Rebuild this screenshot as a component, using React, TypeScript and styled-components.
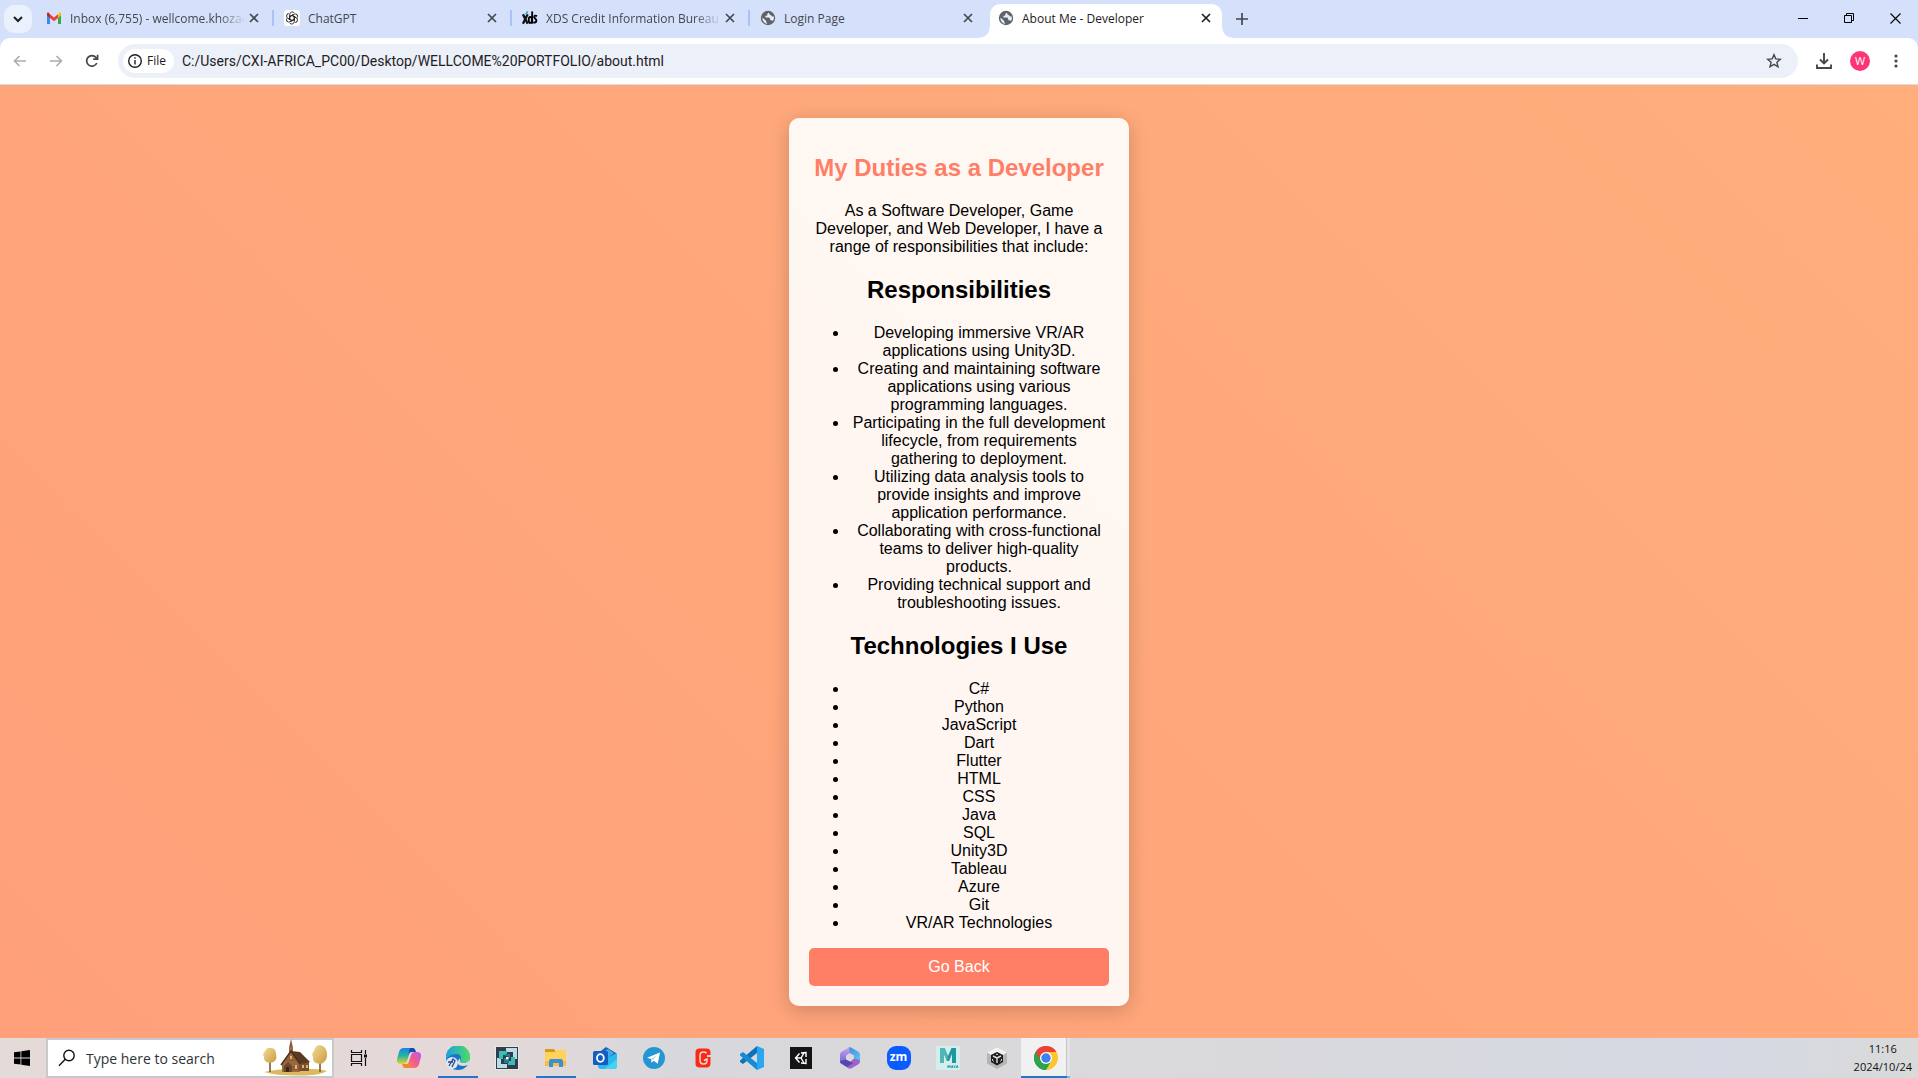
import React from "react";
import styled, { createGlobalStyle } from "styled-components";

const Global = createGlobalStyle`
  * { box-sizing: border-box; }
  body { margin: 0; }
  button, input { font: inherit; color: inherit; border: 0; background: none; padding: 0; }
`;

const ui = `"Open Sans", "Noto Sans", sans-serif`;
const arial = `"Liberation Sans", Arial, sans-serif`;

const Screen = styled.div`
  display: flex;
  flex-direction: column;
  min-height: 100vh;
  font-family: ${ui};
  background: #d5e1fb;
`;

const TabStrip = styled.header`
  display: flex;
  align-items: center;
  height: 38px;
  padding-left: 4px;
  color: #43474e;
`;

const TabSearch = styled.button`
  display: grid;
  place-items: center;
  width: 28px;
  height: 28px;
  border-radius: 10px;
  background: #ebf1fc;
  color: #1c1e22;
`;

const Tabs = styled.nav`
  display: flex;
  align-self: stretch;
  align-items: flex-end;
  padding-left: 2px;
`;

const Tab = styled.div<{ $active?: boolean; $divided?: boolean }>`
  position: relative;
  display: flex;
  align-items: center;
  width: 238px;
  height: 34px;
  padding: 0 10px 6px 12px;
  border-radius: 10px 10px 0 0;
  font-size: 12px;
  color: ${(p) => (p.$active ? "#1f2023" : "#43474e")};
  background: ${(p) => (p.$active ? "#fff" : "transparent")};

  &::after {
    content: "";
    position: absolute;
    display: ${(p) => (p.$divided ? "block" : "none")};
    right: -2px;
    top: 6px;
    width: 2px;
    height: 16px;
    background: #a8c4f6;
  }

  ${(p) =>
    p.$active &&
    `
    width: 232px;
    margin-left: 4px;
    padding: 0 8px 6px 8px;
    &::before {
      content: "";
      position: absolute;
      inset: auto -10px 0;
      height: 10px;
      background:
        radial-gradient(circle at 0 0, transparent 9px, #fff 10px) left / 10px 10px no-repeat,
        radial-gradient(circle at 100% 0, transparent 9px, #fff 10px) right / 10px 10px no-repeat;
    }
  `}
`;

const TabTitle = styled.span<{ $fade?: boolean }>`
  flex: 1;
  padding-left: 8px;
  overflow: hidden;
  white-space: nowrap;
  ${(p) => p.$fade && "mask-image: linear-gradient(to right, #000 85%, transparent);"}
`;

const IconButton = styled.button<{ $w?: number }>`
  display: grid;
  place-items: center;
  flex: none;
  width: ${(p) => p.$w ?? 16}px;
  height: 24px;
`;

const WindowButtons = styled.div`
  display: flex;
  margin-left: auto;
  padding-bottom: 2px;
  color: #000;
`;

const Toolbar = styled.div`
  display: flex;
  align-items: center;
  height: 47px;
  padding: 0 4px 1px 2px;
  background: #fff;
  border-bottom: 1px solid #d9dde3;
  border-radius: 10px 10px 0 0;
  color: #44474b;
`;

const AddressBar = styled.form`
  display: flex;
  align-items: center;
  flex: 1;
  gap: 8px;
  height: 34px;
  margin: 0 8px 0 8px;
  padding: 0 12px 0 5px;
  border-radius: 17px;
  background: #ebf0f9;
`;

const SchemeChip = styled.button`
  display: flex;
  align-items: center;
  gap: 4px;
  height: 24px;
  padding: 0 8px 0 4px;
  border-radius: 12px;
  background: #fff;
  font-size: 12px;
  font-weight: 500;
  color: #1f2023;
`;

const Url = styled.input`
  flex: 1;
  min-width: 0;
  font-family: Roboto, ${ui};
  font-size: 14px;
  color: #1f2023;
  outline: none;
`;

const Avatar = styled.span`
  display: grid;
  place-items: center;
  width: 20px;
  height: 20px;
  border-radius: 50%;
  background: #fb3576;
  color: #fff;
  font-size: 11px;
`;

const Page = styled.main`
  display: flex;
  flex: 1;
  align-items: center;
  justify-content: center;
  padding: 20px;
  background: linear-gradient(45deg, #ffa07a, #ffae7c);
  font-family: ${arial};
  font-size: 16px;
  line-height: 18px;
  color: #000;
`;

const Card = styled.section`
  width: 340px;
  padding: 20px;
  border-radius: 10px;
  background: rgba(255, 255, 255, 0.9);
  box-shadow: 0 4px 20px rgba(0, 0, 0, 0.2);
  text-align: center;
`;

const Heading = styled.h2<{ $accent?: boolean }>`
  margin: ${(p) => (p.$accent ? "16px" : "20px")} 0 20px;
  font-size: 24px;
  line-height: 28px;
  color: ${(p) => (p.$accent ? "#ff7f66" : "#000")};
`;

const Intro = styled.p`
  margin: 0;
`;

const List = styled.ul`
  margin: 0 0 16px;
  padding-left: 40px;
`;

const BackButton = styled.button`
  display: block;
  width: 100%;
  height: 38px;
  border-radius: 5px;
  background: #ff7f66;
  color: #fff;
`;

const Taskbar = styled.footer`
  display: flex;
  align-items: stretch;
  height: 40px;
  background: linear-gradient(to right, #e4dad8 0%, #e4d9d8 25%, #d8d8dc 35%, #dad9db 60%, #d5d9e3 90%, #d9dad9 100%);
`;

const StartButton = styled.button`
  display: grid;
  place-items: center;
  width: 46px;
  padding-right: 2px;
`;

const SearchBox = styled.label`
  display: flex;
  align-items: center;
  width: 288px;
  padding: 0 4px 0 10px;
  border: 2px solid #c9c9cb;
  background: #fff;
`;

const SearchInput = styled.input`
  flex: 1;
  min-width: 0;
  padding-left: 10px;
  font-size: 14px;
  outline: none;
  &::placeholder { color: #2f3338; opacity: 1; }
`;

const TaskButtons = styled.nav`
  display: flex;
  padding-left: 1px;
`;

const TaskButton = styled.button<{ $open?: boolean; $active?: boolean }>`
  display: grid;
  place-items: center;
  width: 49px;
  border-bottom: 2px solid transparent;
  border-top: 2px solid transparent;
  ${(p) => p.$open && "background: linear-gradient(#1f78cc, #1f78cc) center bottom / 40px 2px no-repeat border-box;"}
  ${(p) =>
    p.$active &&
    `background:
      linear-gradient(#1f78cc, #1f78cc) left bottom / 46px 2px no-repeat border-box,
      linear-gradient(#7fb3e2, #7fb3e2) right bottom / 3px 2px no-repeat border-box,
      linear-gradient(to right, #f1f1f2 45px, #c4c4c8 45px, #c4c4c8 46px, #e4e4e7 46px) border-box;`}
`;

const Clock = styled.time`
  display: flex;
  flex-direction: column;
  justify-content: center;
  margin-left: auto;
  padding-right: 6px;
  font-size: 11px;
  line-height: 18px;
  text-align: center;
  color: #111;
`;

const Close = () => (
  <svg width="10" height="10" viewBox="0 0 10 10" stroke="currentColor" strokeWidth="1.7"><path d="M1 1l8 8M9 1L1 9" /></svg>
);
const Gmail = () => (
  <svg width="16" height="16" viewBox="0 0 16 16">
    <path d="M1 3.5V14h3V7.5z" fill="#4285f4" /><path d="M12 7.5V14h3V3.5z" fill="#34a853" />
    <path d="M1 3.6v2l3 2.4V4.5L2.6 2.6Q1 2 1 3.6" fill="#c5221f" /><path d="M15 3.6v2L12 8V4.5l1.4-1.9Q15 2 15 3.6" fill="#fbbc04" />
    <path d="M4 4.3l4 3.2 4-3.2V8l-4 3.2L4 8z" fill="#ea4335" />
  </svg>
);
const Gpt = () => (
  <svg width="16" height="16" viewBox="0 0 16 16">
    <rect width="16" height="16" rx="3" fill="#fff" />
    <g fill="none" stroke="#222" strokeWidth="0.9">
      {[0, 60, 120, 180, 240, 300].map((a) => (
        <path key={a} transform={`rotate(${a} 8 8)`} d="M5.7 9.3V4.6a2.6 2.6 0 0 1 4.6-1.7M5.7 6.7L8 5.3l3.6 2.1" />
      ))}
    </g>
  </svg>
);
const Xds = () => (
  <svg width="16" height="16" viewBox="0 0 17 16">
    <path d="M1 4l5 10M6 4L1 14" stroke="#111" strokeWidth="2.4" /><path d="M4 4.5L6 1" stroke="#18a6c9" strokeWidth="1.6" />
    <ellipse cx="8.8" cy="10" rx="1.7" ry="3.2" fill="none" stroke="#000" strokeWidth="2" /><path d="M10.8 1v13" stroke="#000" strokeWidth="2" />
    <path d="M16 6c-3-1.5-4 1-2 2.6s2 5-2 4" fill="none" stroke="#000" strokeWidth="2" />
  </svg>
);
const Globe = () => (
  <svg width="16" height="16" viewBox="0 0 16 16">
    <circle cx="8" cy="8" r="7.2" fill="#5f6368" />
    <path d="M8.600 2.400L7.200 4.200v1.600H5.400v1.700h3.800l1 1.200v1.500h1.600l1.200.8a6 6 0 0 0 .8-4.400h-1.600L11 5.200 9.600 4.600zM2.400 7.400l3.800 3.500v1l1.200 2a6 6 0 0 1-5-6.500" fill="#e8eefb" />
  </svg>
);
const WindowsLogo = () => (
  <svg width="16" height="16" viewBox="0 0 16 16"><path d="M0 2.3l6.5-.9v6.1H0zM7.3 1.2L16 0v7.5H7.3zM0 8.4h6.5v6.2L0 13.7zM7.3 8.4H16V16l-8.7-1.2z" /></svg>
);
const Magnifier = () => (
  <svg width="18" height="18" viewBox="0 0 18 18" fill="none" stroke="#111" strokeWidth="1.4"><circle cx="11" cy="6.5" r="5.2" /><path d="M7.3 10.2L1 16.7" /></svg>
);
const Cabin = () => (
  <svg width="66" height="38" viewBox="0 0 66 38">
    <defs>
      <linearGradient id="leaf" x1="0" y1="0" x2="1" y2="1"><stop stopColor="#f3dc98" /><stop offset="1" stopColor="#c99a3c" /></linearGradient>
    </defs>
    <path d="M2 33q12-3 30-3 22-1 33 2-6 4-22 4.500Q14 37 2 33" fill="#dcb85f" />
    <path d="M8 20v13M58 20v13" stroke="#80572b" strokeWidth="1.6" />
    <path d="M3 12q2-4 6-3 5 0 5 6 2 8-6 9-7-1-6-6-2-3 1-6" fill="url(#leaf)" />
    <path d="M52 12q1-6 6-6 6 1 7 8 1 9-7 11-8-1-7-7-2-3 1-6" fill="url(#leaf)" />
    <path d="M27 9l2-9 2 9v6h-4z" fill="#8b5337" /><path d="M27 8h4v6h-4z" fill="#a4694a" />
    <path d="M20 25l9-13 9 12v9H20z" fill="#98683e" />
    <path d="M37 23h10v9H37z" fill="#7a4e30" /><path d="M29 12l9 1 10 10-10 2z" fill="#5b3a23" />
    <path d="M19 26l10-14 9 13" stroke="#4b2e1c" strokeWidth="1.500" fill="none" />
    <path d="M21 28h16M21 30.500h16M24 21h10M25.500 18.500h7M38 28h9M38 30.500h9" stroke="#6f482b" strokeWidth=".6" />
    <path d="M22 27l4-4 4 4v6h-8z" fill="#6d452a" /><path d="M24 28h3v5h-3z" fill="#3e2616" /><path d="M33 26h2v4h-2zM40 26h2v3h-2zM44 26h2v3h-2zM28 17h2v3h-2z" fill="#e2b566" />
  </svg>
);
const TaskView = () => (
  <svg width="20" height="16" viewBox="0 0 20 16" fill="none" stroke="#111" strokeWidth="1.2">
    <path d="M1.500 0v2.500h10V0M1.500 16v-2.500h10V16M1.500 4.500h10v7h-10zM15.500 0v4M15.500 8v8" /><path d="M14 4.500h3v3h-3z" fill="#111" stroke="none" />
  </svg>
);
const Copilot = () => (
  <svg width="24" height="24" viewBox="0 0 24 24">
    <defs>
      <linearGradient id="cpa" x1="0" y1="0" x2="0" y2="1"><stop stopColor="#1584e5" /><stop offset=".5" stopColor="#27b6a0" /><stop offset="1" stopColor="#f2cf28" /></linearGradient>
      <linearGradient id="cpb" x1="1" y1="0" x2="0" y2="1"><stop stopColor="#b45cf0" /><stop offset=".5" stopColor="#f35a8c" /><stop offset="1" stopColor="#ff9440" /></linearGradient>
    </defs>
    <path d="M7 2h9q-2 1-3 4l-3 9q-1 3-4 3H3q-4-1-3-5l2-7q1-4 5-4" fill="url(#cpa)" />
    <path d="M13 2h3q2 0 3 4h-4q-3 0-4 3z" fill="#1748b7" />
    <path d="M17 22H8q2-1 3-4l3-9q1-3 4-3h3q4 1 3 5l-2 7q-1 4-5 4" fill="url(#cpb)" />
    <path d="M11 22H8q-2 0-3-4h4q3 0 4-3z" fill="#f08a28" />
  </svg>
);
const Edge = () => (
  <svg width="24" height="24" viewBox="0 0 24 24">
    <defs><linearGradient id="edg"><stop stopColor="#1c9fe0" /><stop offset="1" stopColor="#4fdc63" /></linearGradient></defs>
    <circle cx="12" cy="12" r="12" fill="#1677c8" />
    <path d="M0 11A12 12 0 0 1 24 11q0 6-6 6-4 0-4-2 1-1 1-3 0-4-5-4Q3 8 0 14z" fill="url(#edg)" />
    <path d="M14 15q0 2 4 2 4 0 6-4 0 4-2 6-5 2-9 0-3-3 1-7" fill="#dfdbdd" />
    <circle cx="6" cy="17" r="6" fill="#dfe7f0" /><path d="M3 20l4-7 2 2-3 6M2 16h5" stroke="#224b88" strokeWidth="1.300" fill="none" />
  </svg>
);
const Squares = () => (
  <svg width="24" height="24" viewBox="0 0 24 24">
    <path d="M0 0h24v24H0z" fill="#e6e9ec" /><path d="M1 1h22v22H1z" fill="#333c4e" />
    <path d="M11 2h11v11h-4V6h-7zM2 12h4v6h6v4H2z" fill="#bcdce6" />
    <path d="M4 5h8v4H8v4H4zM13 15h3v-4h4v8h-7z" fill="#38bfb0" />
    <path d="M10 8h5v4h-2v-2h-3zM9 12h2v2h3v3H9z" fill="#187f9c" />
    <path d="M11 11h2.500v2.500H11z" fill="#fff" />
  </svg>
);
const Folder = () => (
  <svg width="22" height="20" viewBox="0 0 22 20">
    <path d="M0 1h9l2 3H0z" fill="#d89b0a" /><path d="M0 4h10l2-2h9v16H0z" fill="#ffd35b" /><path d="M0 13h21v5H0z" fill="#f3be42" /><path d="M4 19v-6l1-2h12l1 2v6h-4v-4H8v4z" fill="#3c8fd6" />
  </svg>
);
const Outlook = () => (
  <svg width="24" height="24" viewBox="0 0 24 24">
    <path d="M4 8l9-7 10 6v9H4z" fill="#1766b8" /><path d="M9 7l6-4 6 4-8 6z" fill="#48a9ea" /><path d="M5 16L24 7v13q0 3-3 3H8q-3 0-3-3z" fill="#28b9ee" /><path d="M11 23L24 13v7q0 3-3 3z" fill="#45d2f3" />
    <rect y="5" width="15" height="14" rx="1.5" fill="#125fc0" /><ellipse cx="7.4" cy="12" rx="3.4" ry="3.8" fill="none" stroke="#fff" strokeWidth="1.8" />
  </svg>
);
const Telegram = () => (
  <svg width="22" height="22" viewBox="0 0 22 22"><circle cx="11" cy="11" r="11" fill="#2497d3" /><path d="M4 10.8L17 5.5l-2.3 11.3-4-3-2.2 2-.4-3.7z" fill="#fff" /><path d="M8.2 12.1L14.5 8l-5 5" fill="#a9cfe8" /></svg>
);
const RedApp = () => (
  <svg width="16" height="20" viewBox="0 0 16 20">
    <rect x=".5" y=".5" width="15" height="19" rx="4" fill="#fa2a14" />
    <path d="M11.500 5.200Q10.500 4 8.500 4 5 4 5 7.500v5Q5 16 8.500 16q3.500 0 3.500-3.500V11L9 12.500" fill="none" stroke="#eadcdc" strokeWidth="1.500" />
    <path d="M12 7h4v2h-4z" fill="#d8d8dc" />
  </svg>
);
const VsCode = () => (
  <svg width="24" height="24" viewBox="0 0 24 24"><path d="M17 0l7 3v18l-7 3z" fill="#2ba6f0" /><path d="M17 0v7L3 18l-3-2v-1.500L17 0" fill="#0f71b8" /><path d="M17 24v-7L3 6 0 8v1.500L17 24" fill="#168bd3" /></svg>
);
const UnityBlack = () => (
  <svg width="22" height="22" viewBox="0 0 22 22"><path d="M0 0h22v22H0z" fill="#141414" /><g fill="none" stroke="#fff" strokeWidth="1.400"><path d="M9.500 6.500L5.500 11l4 4.500M5.500 11H11l3-5M11 11l3 5M11 6l5-.5v4.500M11 16l5 .5V12" /></g></svg>
);
const M365 = () => (
  <svg width="22" height="24" viewBox="0 0 22 24">
    <defs>
      <linearGradient id="ma" x1="0" y1="0" x2="1" y2="1"><stop stopColor="#4a86e0" /><stop offset="1" stopColor="#58cdf0" /></linearGradient>
      <linearGradient id="mb" x1="0" y1="0" x2="0" y2="1"><stop stopColor="#c8a0f4" /><stop offset="1" stopColor="#6a62d2" /></linearGradient>
    </defs>
    <path d="M9 2q2-1.500 4 0l6 3.500q2 1 2 3V16l-6-3.500V9.500L10 6.500z" fill="url(#ma)" />
    <path d="M10 1.500L3 5.500q-2 1-2 3V17l3 1 3-3V9.500l4-2.500z" fill="url(#mb)" />
    <path d="M1 15q0 2 2 3l6 4q2 1 4 0l6-3.500q2-1 2-3V14l-6-1.500-4 3.500z" fill="#9a64cc" />
    <path d="M1 15q0 2 2 3l5 3 6-4-3-1.500-4-2z" fill="#5a45b0" />
  </svg>
);
const ZoomBadge = styled.span`
  display: grid;
  place-items: center;
  width: 24px;
  height: 24px;
  border-radius: 9px;
  background: #0b5cff;
  color: #fff;
  font: 700 12px/20px ${ui};
  padding-bottom: 2px;
`;
const Maya = () => (
  <svg width="24" height="24" viewBox="0 0 24 24">
    <path d="M0 0h24v24H0z" fill="#d5eeed" />
    <path d="M4 17V2h4.500L12 10l3.500-8H20v15h-4V8l-3 7h-2L8 8v9z" fill="#1a9a9c" />
    <path d="M4 2h4.500L12 10l-1 5h0L8 8v9H4z" fill="#4fb8b4" />
    <path d="M12 22v-2.500l1 1.500 1-1.500V22M15.500 22l.7-2.500.8 2.500M18 19.500l.7 1.200.8-1.200M18.700 20.700V22M20.500 22l.7-2.500.8 2.500" stroke="#128f93" strokeWidth=".9" fill="none" />
  </svg>
);
const UnityHub = () => (
  <svg width="20" height="22" viewBox="0 0 20 22">
    <path d="M10 0l10 5.500v11L10 22 0 16.500v-11z" fill="#b5b5b5" /><path d="M10 0l10 5.500-4 2.500-6-3-6 3-4-2.500z" fill="#f2f2f2" />
    <path d="M10 5l6 3v7l-6 3.500L4 15V8z" fill="#1d1d1d" />
    <path d="M10 11v5M10 11L6 9M10 11l4-2" stroke="#dcdcdc" strokeWidth="1.400" />
    <path d="M9 7l1 .6 1-.6M5.500 12v1.500l1.300.8M14.500 12v1.500l-1.300.8" stroke="#dcdcdc" strokeWidth="1" fill="none" />
  </svg>
);
const Chrome = () => (
  <svg width="24" height="24" viewBox="0 0 24 24">
    <path d="M12 12L1.610 6A12 12 0 0 1 22.390 6z" fill="#ea4335" /><path d="M1.610 6A12 12 0 0 0 12 24l5-9-5-3z" fill="#2da34c" /><path d="M22.390 6H12l5.200 9L12 24A12 12 0 0 0 22.390 6" fill="#fcc62d" />
    <path d="M1.610 6A12 12 0 0 1 22.390 6H12a6 6 0 0 0-5.200 9z" fill="#ea4335" /><path d="M1.610 6l5.200 9A6 6 0 0 0 17.200 15L12 24A12 12 0 0 1 1.610 6" fill="#2da34c" />
    <circle cx="12" cy="12" r="6" fill="#fff" /><circle cx="12" cy="12" r="4.700" fill="#3f7fee" />
  </svg>
);

const tabs = [
  { title: "Inbox (6,755) - wellcome.khoza4", icon: <Gmail />, fade: true, divided: true },
  { title: "ChatGPT", icon: <Gpt />, divided: true },
  { title: "XDS Credit Information Bureau", icon: <Xds />, fade: true, divided: true },
  { title: "Login Page", icon: <Globe /> },
  { title: "About Me - Developer", icon: <Globe />, active: true },
];

const duties = [
  "Developing immersive VR/AR applications using Unity3D.",
  "Creating and maintaining software applications using various programming languages.",
  "Participating in the full development lifecycle, from requirements gathering to deployment.",
  "Utilizing data analysis tools to provide insights and improve application performance.",
  "Collaborating with cross-functional teams to deliver high-quality products.",
  "Providing technical support and troubleshooting issues.",
];

const technologies = ["C#", "Python", "JavaScript", "Dart", "Flutter", "HTML", "CSS", "Java", "SQL", "Unity3D", "Tableau", "Azure", "Git", "VR/AR Technologies"];

const apps = [
  { name: "Task View", icon: <TaskView /> },
  { name: "Copilot", icon: <Copilot /> },
  { name: "Edge", icon: <Edge />, open: true },
  { name: "Tiles", icon: <Squares /> },
  { name: "File Explorer", icon: <Folder />, open: true },
  { name: "Outlook", icon: <Outlook /> },
  { name: "Telegram", icon: <Telegram /> },
  { name: "C app", icon: <RedApp /> },
  { name: "VS Code", icon: <VsCode /> },
  { name: "Unity", icon: <UnityBlack /> },
  { name: "Microsoft 365", icon: <M365 /> },
  { name: "Zoom", icon: <ZoomBadge>zm</ZoomBadge> },
  { name: "Maya", icon: <Maya /> },
  { name: "Unity Hub", icon: <UnityHub /> },
  { name: "Chrome", icon: <Chrome />, active: true },
];

export default function App() {
  return (
    <Screen>
      <Global />
      <TabStrip>
        <TabSearch aria-label="Search tabs">
          <svg width="10" height="8" viewBox="0 0 10 8" fill="none" stroke="currentColor" strokeWidth="2"><path d="M1 2l4 4 4-4" /></svg>
        </TabSearch>
        <Tabs>
          {tabs.map((t) => (
            <Tab key={t.title} $active={t.active} $divided={t.divided}>
              {t.icon}
              <TabTitle $fade={t.fade}>{t.title}</TabTitle>
              <IconButton aria-label="Close tab"><Close /></IconButton>
            </Tab>
          ))}
        </Tabs>
        <IconButton $w={40} aria-label="New tab">
          <svg width="12" height="12" viewBox="0 0 12 12" stroke="currentColor" strokeWidth="1.7"><path d="M6 0v12M0 6h12" /></svg>
        </IconButton>
        <WindowButtons>
          <IconButton $w={46} aria-label="Minimize"><svg width="10" height="10"><path d="M0 5.500h10" stroke="#000" /></svg></IconButton>
          <IconButton $w={46} aria-label="Restore"><svg width="10" height="10" fill="none" stroke="#000"><path d="M.5 2.500h7v7h-7zM2.500 2.500v-2h7v7h-2" /></svg></IconButton>
          <IconButton $w={46} aria-label="Close"><svg width="11" height="11" stroke="#000" strokeWidth="1.100"><path d="M.5.5l10 10M10.500.5l-10 10" /></svg></IconButton>
        </WindowButtons>
      </TabStrip>
      <Toolbar>
        <IconButton $w={36} aria-label="Back"><svg width="14" height="12" viewBox="0 0 14 12" fill="none" stroke="#a9acb0" strokeWidth="1.600"><path d="M13 6H1.500M6.500 1l-5 5 5 5" /></svg></IconButton>
        <IconButton $w={36} aria-label="Forward"><svg width="14" height="12" viewBox="0 0 14 12" fill="none" stroke="#a9acb0" strokeWidth="1.600"><path d="M1 6h11.500M7.500 1l5 5-5 5" /></svg></IconButton>
        <IconButton $w={36} aria-label="Reload"><svg width="14" height="14" viewBox="0 0 14 14" fill="none" stroke="currentColor" strokeWidth="1.700"><path d="M11.800 9a5.300 5.300 0 1 1-.8-5.500l1.500 1.500M12.600 .8v4.400H8.200" /></svg></IconButton>
        <AddressBar>
          <SchemeChip type="button">
            <svg width="16" height="16" viewBox="0 0 16 16" fill="none" stroke="currentColor" strokeWidth="1.400"><circle cx="8" cy="8" r="6.300" /><path d="M8 7v4.500M8 4.300v1.500" /></svg>
            File
          </SchemeChip>
          <Url aria-label="Address" defaultValue="C:/Users/CXI-AFRICA_PC00/Desktop/WELLCOME%20PORTFOLIO/about.html" />
          <IconButton $w={24} type="button" aria-label="Bookmark"><svg width="16" height="16" viewBox="0 0 16 16" fill="none" stroke="currentColor" strokeWidth="1.400"><path d="M8 1.700l1.800 4.200 4.600.4-3.500 3 1.100 4.500L8 11.400l-4 2.400 1.100-4.500-3.500-3 4.600-.4z" /></svg></IconButton>
        </AddressBar>
        <IconButton $w={36} aria-label="Downloads"><svg width="16" height="16" viewBox="0 0 16 16" fill="none" stroke="currentColor" strokeWidth="1.900"><path d="M8 0v10M4 6.500l4 4 4-4M1 11.500V15h14v-3.500" /></svg></IconButton>
        <IconButton $w={36} aria-label="Profile"><Avatar>W</Avatar></IconButton>
        <IconButton $w={36} aria-label="Menu"><svg width="4" height="14" fill="currentColor"><circle cx="2" cy="2" r="1.600" /><circle cx="2" cy="7" r="1.600" /><circle cx="2" cy="12" r="1.600" /></svg></IconButton>
      </Toolbar>
      <Page>
        <Card>
          <Heading as="h1" $accent>My Duties as a Developer</Heading>
          <Intro>As a Software Developer, Game Developer, and Web Developer, I have a range of responsibilities that include:</Intro>
          <Heading>Responsibilities</Heading>
          <List>{duties.map((d) => <li key={d}>{d}</li>)}</List>
          <Heading>Technologies I Use</Heading>
          <List>{technologies.map((t) => <li key={t}>{t}</li>)}</List>
          <BackButton>Go Back</BackButton>
        </Card>
      </Page>
      <Taskbar>
        <StartButton aria-label="Start"><WindowsLogo /></StartButton>
        <SearchBox>
          <Magnifier />
          <SearchInput aria-label="Search" placeholder="Type here to search" />
          <Cabin />
        </SearchBox>
        <TaskButtons>
          {apps.map((a) => (
            <TaskButton key={a.name} aria-label={a.name} $open={a.open} $active={a.active}>{a.icon}</TaskButton>
          ))}
        </TaskButtons>
        <Clock><span>11:16</span><span>2024/10/24</span></Clock>
      </Taskbar>
    </Screen>
  );
}
